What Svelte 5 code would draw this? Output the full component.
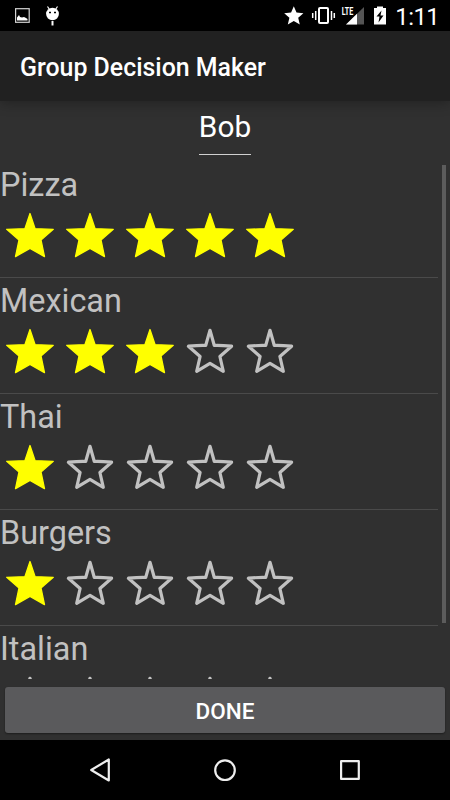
<script>
  const options = [
    { name: 'Pizza', rating: 5 },
    { name: 'Mexican', rating: 3 },
    { name: 'Thai', rating: 1 },
    { name: 'Burgers', rating: 1 },
    { name: 'Italian', rating: 0 }
  ];
  const slots = [1, 2, 3, 4, 5];
</script>

<div class="screen">
  <header class="status">
    <svg width="150" height="31" viewBox="0 0 150 31">
      <rect x="15.6" y="8.7" width="13.6" height="13.6" fill="none" stroke="#d4d4d4" stroke-width="1.2" />
      <path d="M17 20.500v-3l2-2.500 1 2 2 .5 2-.5 2 1 1.500 1v1.500z" fill="#fff" />
      <ellipse cx="52.500" cy="14" rx="6.400" ry="6.200" fill="#fff" />
      <path d="M49.500 9.500L47.500 6.500M55.500 9.500l2-3" stroke="#fff" stroke-width="1.200" />
      <path d="M52.500 21v4.500" stroke="#fff" stroke-width="2" />
      <path d="M49 12.500h2M54 12.500h2" stroke="#000" stroke-width="1.300" />
    </svg>
    <svg width="180" height="31" viewBox="270 0 180 31">
      <path d="M293.800 6.300l2.700 6.300 6.900.6-5.200 4.500 1.600 6.900-6-3.700-6 3.700 1.600-6.900-5.200-4.500 6.900-.6z" fill="#fff" />
      <rect x="319" y="8" width="9" height="15" rx="1" fill="none" stroke="#fff" stroke-width="2" />
      <path d="M312.700 13v5M315.700 11v9M331.500 11v9M334.300 13v5" stroke="#fff" stroke-width="1.500" />
      <path d="M364 7v17.500h-18z" fill="#555" />
      <path d="M357 13.800v10.700h-11z" fill="#fff" />
      <text x="341.800" y="15" class="lte" textLength="11.500" lengthAdjust="spacingAndGlyphs">LTE</text>
      <path d="M374 8h3V6.500h6V8h3v16.500h-12z" fill="#fff" />
      <path d="M381.500 10.500l-5 6h3l-1 6 5-7h-3z" fill="#000" />
      <text x="395.300" y="24.500" class="clock" textLength="44.500">1:11</text>
    </svg>
  </header>

  <div class="appbar"><h1>Group Decision Maker</h1></div>

  <main>
    <div class="person"><span>Bob</span></div>
    <div class="list">
      <ul>
        {#each options as option}
          <li>
            <div class="label">{option.name}</div>
            <div class="stars">
              {#each slots as slot}
                <svg width="60" height="60" viewBox="0 0 60 60">
                  {#if slot <= option.rating}
                    <path class="on" d="M30 8.500L35.100 23.700L53.300 24.300L41 35L44.500 51.600L30 43.400L15.500 51.600L19 35L6.700 24.300L24.900 23.700Z" />
                  {:else}
                    <path class="off" d="M30 9.300L34.300 24.500Q40 24.200 51.600 25.200L39.900 35.500L43.300 50.300L30 42.400L16.700 50.300L20.100 35.500L8.400 25.200Q20 24.200 25.700 24.500Z" />
                  {/if}
                </svg>
              {/each}
            </div>
          </li>
        {/each}
      </ul>
      <div class="scrollbar"></div>
    </div>
    <button>DONE</button>
  </main>

  <nav>
    <svg width="270" height="60" viewBox="90 0 270 60">
      <g fill="none" stroke="#eee" stroke-width="2.200" stroke-linejoin="round">
        <path d="M108.800 19.500v21L91.200 30z" />
        <circle cx="225" cy="30.200" r="9.800" />
        <rect x="341.100" y="21.200" width="17.700" height="17.700" />
      </g>
    </svg>
  </nav>
</div>

<style>
  .screen {
    width: 450px;
    height: 800px;
    display: flex;
    flex-direction: column;
    overflow: hidden;
    background: #303030;
    color: #fff;
    font-family: Roboto, sans-serif;
  }
  svg { display: block; flex: none; }
  .status {
    height: 31px;
    flex: none;
    display: flex;
    justify-content: space-between;
    background: #000;
  }
  .lte { font: 700 11px Roboto, sans-serif; fill: #fff; }
  .clock { font: 400 24px Roboto, sans-serif; fill: #fff; }
  .appbar {
    height: 70px;
    flex: none;
    display: flex;
    align-items: center;
    padding: 3px 20px 0;
    box-sizing: border-box;
    background: #212121;
    box-shadow: 0 2px 12px rgba(0, 0, 0, 0.3);
  }
  h1 {
    margin: 0;
    font-size: 24.9px;
    line-height: 30px;
    font-weight: 500;
    white-space: nowrap;
  }
  main {
    flex: 1;
    min-height: 0;
    display: flex;
    flex-direction: column;
  }
  .person {
    height: 64px;
    flex: none;
    display: flex;
    justify-content: center;
    align-items: flex-start;
  }
  .person span {
    height: 53px;
    border-bottom: 1px solid #d0d0d0;
    font-size: 29.8px;
    line-height: 51px;
  }
  .list {
    height: 514px;
    flex: none;
    display: flex;
    justify-content: space-between;
    padding-right: 4px;
    overflow: hidden;
  }
  ul {
    width: 438px;
    margin: 0;
    padding: 0;
    list-style: none;
  }
  li {
    height: 116px;
    box-sizing: border-box;
    padding-top: 3px;
    border-bottom: 1px solid #4a4a4a;
  }
  li:first-child { height: 113px; padding-top: 0; }
  .label {
    height: 40px;
    color: #c1c1c1;
    font-size: 32.4px;
    line-height: 40px;
  }
  .stars { display: flex; }
  .on { fill: #ff0; stroke: #ff0; stroke-width: 1.3; stroke-linejoin: round; }
  .off { fill: none; stroke: #c1c1c1; stroke-width: 3.2; stroke-linejoin: round; }
  .scrollbar { width: 4px; height: 458px; background: #5c5c5c; }
  button {
    height: 46px;
    margin: 8px 5px 0;
    padding: 3px 0 0;
    flex: none;
    border: 0;
    border-radius: 3px;
    background: #5a5a5c;
    box-shadow: 0 1px 2px rgba(0, 0, 0, 0.4);
    color: #fff;
    font: 500 22.5px/43px Roboto, sans-serif;
  }
  nav {
    height: 60px;
    flex: none;
    display: flex;
    justify-content: center;
    background: #000;
  }
</style>
